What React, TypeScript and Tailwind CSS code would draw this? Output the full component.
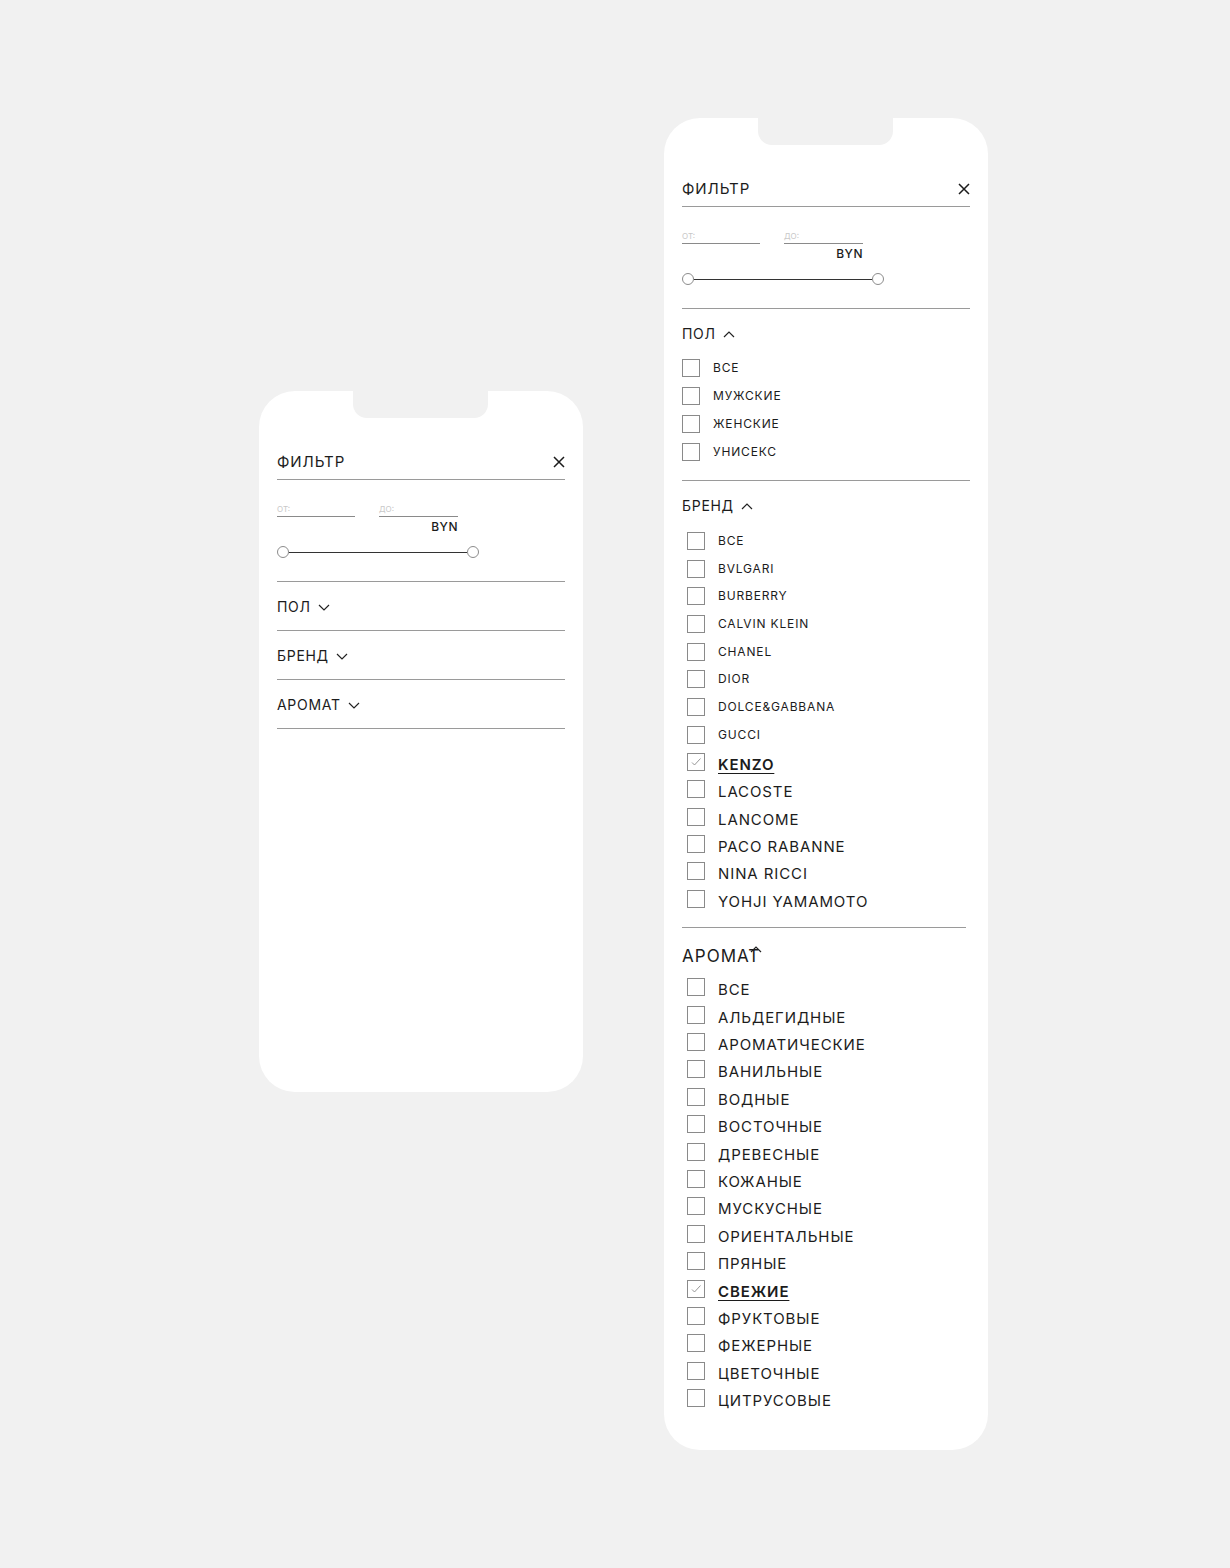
const GENDERS = ["ВСЕ", "МУЖСКИЕ", "ЖЕНСКИЕ", "УНИСЕКС"];
const BRANDS_SMALL = ["ВСЕ", "BVLGARI", "BURBERRY", "CALVIN KLEIN", "CHANEL", "DIOR", "DOLCE&GABBANA", "GUCCI"];
const BRANDS_LARGE = ["KENZO", "LACOSTE", "LANCOME", "PACO RABANNE", "NINA RICCI", "YOHJI YAMAMOTO"];
const AROMAS = [
  "ВСЕ",
  "АЛЬДЕГИДНЫЕ",
  "АРОМАТИЧЕСКИЕ",
  "ВАНИЛЬНЫЕ",
  "ВОДНЫЕ",
  "ВОСТОЧНЫЕ",
  "ДРЕВЕСНЫЕ",
  "КОЖАНЫЕ",
  "МУСКУСНЫЕ",
  "ОРИЕНТАЛЬНЫЕ",
  "ПРЯНЫЕ",
  "СВЕЖИЕ",
  "ФРУКТОВЫЕ",
  "ФЕЖЕРНЫЕ",
  "ЦВЕТОЧНЫЕ",
  "ЦИТРУСОВЫЕ",
];

function ChevronDown() {
  return (
    <svg width="12" height="7" viewBox="0 0 12 7" fill="none">
      <path d="M1 1l5 5 5-5" stroke="#222" strokeWidth="1.2" />
    </svg>
  );
}

function ChevronUp({ className = "" }: { className?: string }) {
  return (
    <svg className={className} width="12" height="7" viewBox="0 0 12 7" fill="none">
      <path d="M1 6l5-5 5 5" stroke="#222" strokeWidth="1.2" />
    </svg>
  );
}

function CloseIcon() {
  return (
    <svg width="12" height="12" viewBox="0 0 12 12" fill="none">
      <path d="M1 1l10 10M11 1L1 11" stroke="#1c1c1c" strokeWidth="1.5" />
    </svg>
  );
}

function Checkbox({ checked = false, className = "" }: { checked?: boolean; className?: string }) {
  return (
    <div className={`flex h-[18px] w-[18px] shrink-0 items-center justify-center border border-[#8a8a8a] bg-white ${className}`}>
      {checked && (
        <svg width="14" height="14" viewBox="0 0 14 14" fill="none">
          <path d="M3 7.5l2.5 2.5L11.5 3.5" stroke="#8a8a8a" strokeWidth="0.9" />
        </svg>
      )}
    </div>
  );
}

function Phone({ height, children }: { height: string; children: React.ReactNode }) {
  return (
    <div className={`relative w-[324px] shrink-0 rounded-[36px] bg-white px-[18px] ${height}`}>
      <div className="absolute left-[94px] top-0 h-[27px] w-[135px] rounded-b-[14px] bg-[#f1f1f1]" />
      {children}
    </div>
  );
}

function FilterHeader() {
  return (
    <>
      <div className="flex items-center justify-between border-b border-[#9a9a9a] pb-[7px] pt-[61px]">
        <span className="text-[15px] leading-[20px] tracking-[0.06em] text-[#1c1c1c]">ФИЛЬТР</span>
        <CloseIcon />
      </div>
      <div className="border-b border-[#9a9a9a] pb-[23px] pt-[24px]">
        <div className="flex items-start gap-[24px]">
          <div className="w-[78px] border-b border-[#8a8a8a] pb-[2px] text-[8px] leading-[10px] text-[#c8c8c8]">ОТ:</div>
          <div className="w-[79px]">
            <div className="border-b border-[#8a8a8a] pb-[2px] text-[8px] leading-[10px] text-[#c8c8c8]">ДО:</div>
            <div className="mt-[3px] text-right text-[12px] font-medium leading-[14px] tracking-[0.04em] text-[#1c1c1c]">BYN</div>
          </div>
        </div>
        <div className="mt-[12px] flex w-[202px] items-center">
          <div className="h-[12px] w-[12px] rounded-full border border-[#8c8c8c] bg-white" />
          <div className="h-px flex-1 bg-[#333]" />
          <div className="h-[12px] w-[12px] rounded-full border border-[#8c8c8c] bg-white" />
        </div>
      </div>
    </>
  );
}

function CollapsedSection({ title }: { title: string }) {
  return (
    <div className="flex items-center gap-[7px] border-b border-[#9a9a9a] pb-[14px] pt-[16px]">
      <span className="text-[14px] leading-[18px] tracking-[0.05em] text-[#1c1c1c]">{title}</span>
      <ChevronDown />
    </div>
  );
}

function SmallRow({ label, indent }: { label: string; indent?: boolean }) {
  return (
    <div className={`flex h-[27.7px] items-center gap-[13px] ${indent ? "pl-[5px]" : ""}`}>
      <Checkbox />
      <span className="text-[12px] leading-[14px] tracking-[0.07em] text-[#1c1c1c]">{label}</span>
    </div>
  );
}

function LargeRow({ label, checked }: { label: string; checked?: boolean }) {
  return (
    <div className="flex h-[27.4px] items-center gap-[13px] pl-[5px]">
      <Checkbox checked={checked} className="-mt-[6px]" />
      <span
        className={`text-[15px] leading-[18px] tracking-[0.06em] text-[#1c1c1c] ${
          checked ? "font-semibold underline decoration-1 underline-offset-[3px]" : ""
        }`}
      >
        {label}
      </span>
    </div>
  );
}

export default function App() {
  return (
    <div className="flex min-h-[1568px] items-start gap-[81px] bg-[#f1f1f1] pl-[259px] pt-[118px] font-['Inter',sans-serif]">
      {/* collapsed filter */}
      <div className="mt-[273px]">
        <Phone height="h-[701px]">
          <FilterHeader />
          <CollapsedSection title="ПОЛ" />
          <CollapsedSection title="БРЕНД" />
          <CollapsedSection title="АРОМАТ" />
        </Phone>
      </div>

      {/* expanded filter */}
      <Phone height="h-[1332px]">
        <FilterHeader />

        <div className="border-b border-[#9a9a9a] pb-[14px] pt-[16px]">
          <div className="flex items-center gap-[7px]">
            <span className="text-[14px] leading-[18px] tracking-[0.05em] text-[#1c1c1c]">ПОЛ</span>
            <ChevronUp />
          </div>
          <div className="mt-[11px]">
            {GENDERS.map((g) => (
              <div key={g} className="flex h-[28px] items-center gap-[13px]">
                <Checkbox />
                <span className="text-[12px] leading-[14px] tracking-[0.07em] text-[#1c1c1c]">{g}</span>
              </div>
            ))}
          </div>
        </div>

        <div className="mr-[4px] border-b border-[#9a9a9a] pb-[11px] pt-[16px]">
          <div className="flex items-center gap-[7px]">
            <span className="text-[14px] leading-[18px] tracking-[0.05em] text-[#1c1c1c]">БРЕНД</span>
            <ChevronUp />
          </div>
          <div className="mt-[12px]">
            {BRANDS_SMALL.map((b) => (
              <SmallRow key={b} label={b} indent />
            ))}
            <div className="mt-[2.7px]">
              {BRANDS_LARGE.map((b) => (
                <LargeRow key={b} label={b} checked={b === "KENZO"} />
              ))}
            </div>
          </div>
        </div>

        <div className="pb-[34px] pt-[17px]">
          <div className="flex items-center">
            <span className="text-[17px] leading-[22px] tracking-[0.06em] text-[#1c1c1c]">АРОМАТ</span>
            <ChevronUp className="-ml-[10px] -mt-[12px]" />
          </div>
          <div className="mt-[10px]">
            {AROMAS.map((a) => (
              <LargeRow key={a} label={a} checked={a === "СВЕЖИЕ"} />
            ))}
          </div>
        </div>
      </Phone>
    </div>
  );
}
